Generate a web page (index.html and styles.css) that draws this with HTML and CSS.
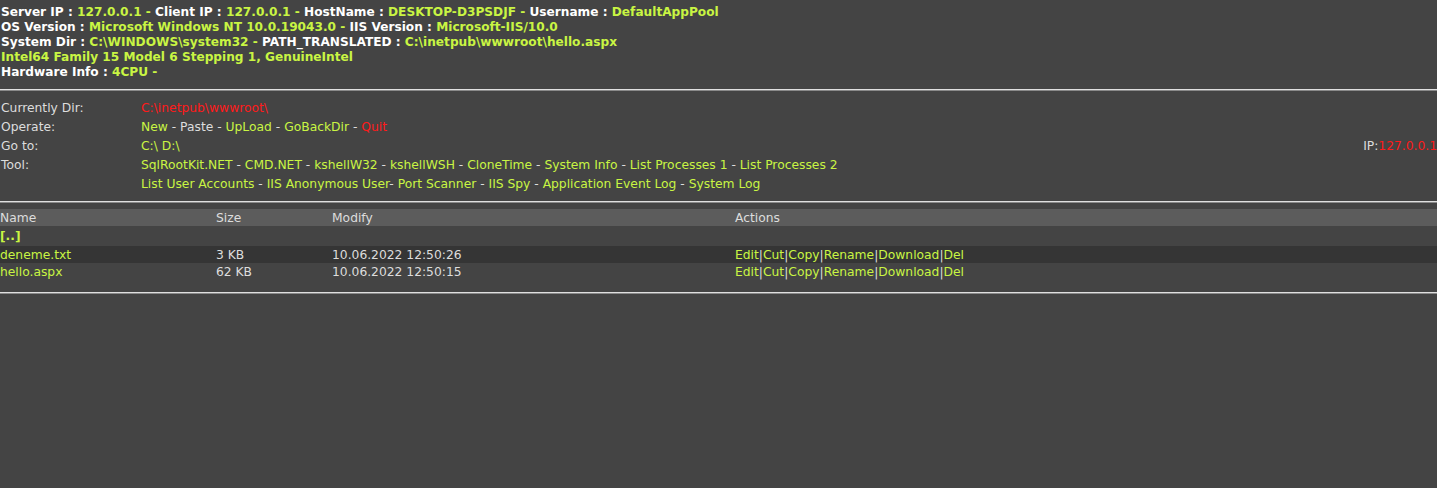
FILE: index.html
```html
<!DOCTYPE html>
<html lang="en">
<head>
    <meta charset="UTF-8">
    <title>ASPXSpy</title>
    <link rel="stylesheet" href="styles.css">
</head>
<body>
    <!-- server info -->
    <div class="sysinfo">
        <div><b>Server IP : </b><span class="val">127.0.0.1 - </span><b>Client IP : </b><span class="val">127.0.0.1 - </span><b>HostName : </b><span class="val">DESKTOP-D3PSDJF - </span><b>Username : </b><span class="val">DefaultAppPool</span></div>
        <div><b>OS Version : </b><span class="val">Microsoft Windows NT 10.0.19043.0 - </span><b>IIS Version : </b><span class="val">Microsoft-IIS/10.0</span></div>
        <div><b>System Dir : </b><span class="val">C:\WINDOWS\system32 - </span><b>PATH_TRANSLATED : </b><span class="val">C:\inetpub\wwwroot\hello.aspx</span></div>
        <div><span class="val">Intel64 Family 15 Model 6 Stepping 1, GenuineIntel</span></div>
        <div><b>Hardware Info : </b><span class="val">4CPU - </span></div>
    </div>
    <div class="rule"></div>

    <table class="menu">
        <tr>
            <td class="label">Currently Dir:</td>
            <td><span class="red">C:\inetpub\wwwroot\</span></td>
            <td></td>
        </tr>
        <tr>
            <td class="label">Operate:</td>
            <td><a href="#">New</a> - <a href="#" class="plain">Paste</a> - <a href="#">UpLoad</a> - <a href="#">GoBackDir</a> - <a href="#" class="red">Quit</a></td>
            <td></td>
        </tr>
        <tr>
            <td class="label">Go to:</td>
            <td><a href="#">C:\</a> <a href="#">D:\</a></td>
            <td class="ip">IP:<span class="red">127.0.0.1</span></td>
        </tr>
        <tr>
            <td class="label">Tool:</td>
            <td><a href="#">SqlRootKit.NET</a> - <a href="#">CMD.NET</a> - <a href="#">kshellW32</a> - <a href="#">kshellWSH</a> - <a href="#">CloneTime</a> - <a href="#">System Info</a> - <a href="#">List Processes 1</a> - <a href="#">List Processes 2</a></td>
            <td></td>
        </tr>
        <tr>
            <td class="label"></td>
            <td><a href="#">List User Accounts</a> - <a href="#">IIS Anonymous User</a>- <a href="#">Port Scanner</a> - <a href="#">IIS Spy</a> - <a href="#">Application Event Log</a> - <a href="#">System Log</a></td>
            <td></td>
        </tr>
    </table>
    <div class="rule mid"></div>

    <!-- file list -->
    <table class="files">
        <tr class="head">
            <td class="c-name">Name</td>
            <td class="c-size">Size</td>
            <td class="c-mod">Modify</td>
            <td>Actions</td>
        </tr>
        <tr class="updir">
            <td colspan="4"><a href="#">[..]</a></td>
        </tr>
        <tr class="alt">
            <td><a href="#">deneme.txt</a></td>
            <td>3 KB</td>
            <td>10.06.2022 12:50:26</td>
            <td class="acts"><a href="#">Edit</a>|<a href="#">Cut</a>|<a href="#">Copy</a>|<a href="#">Rename</a>|<a href="#">Download</a>|<a href="#">Del</a></td>
        </tr>
        <tr>
            <td><a href="#">hello.aspx</a></td>
            <td>62 KB</td>
            <td>10.06.2022 12:50:15</td>
            <td class="acts"><a href="#">Edit</a>|<a href="#">Cut</a>|<a href="#">Copy</a>|<a href="#">Rename</a>|<a href="#">Download</a>|<a href="#">Del</a></td>
        </tr>
    </table>
    <div class="rule bottom"></div>
</body>
</html>
```

FILE: styles.css
```css
body {
    margin: 0;
    padding: 0;
    background-color: #444444;
    color: #dddddd;
    font-family: "DejaVu Sans", Verdana, sans-serif;
    font-size: 12.3px;
}
a {
    color: #c9f543;
    text-decoration: none;
}
.val {
    color: #c9f543;
}
.red, a.red {
    color: #ff1a1a;
}
a.plain {
    color: #dddddd;
}

/* top block with server details */
.sysinfo {
    padding: 5px 0 0 1px;
    font-size: 12.15px;
    line-height: 15px;
    font-weight: bold;
    color: #ffffff;
}
.sysinfo b {
    color: #ffffff;
}

.rule {
    margin-top: 9px;
    border-top: 1px solid #e0e0e0;
    border-bottom: 1px solid #8a8a8a;
}
.rule.mid {
    margin-top: 8px;
}
.rule.bottom {
    margin-top: 12px;
}

/* operate / tool menu */
.menu {
    width: 100%;
    border-collapse: collapse;
    margin-top: 7px;
}
.menu td {
    padding: 0;
    height: 19px;
    white-space: nowrap;
}
.menu td.label {
    width: 140px;
    padding-left: 1px;
}
.menu td.ip {
    text-align: right;
}

/* file listing */
.files {
    width: 100%;
    border-collapse: collapse;
    margin-top: 6px;
}
.files td {
    padding: 0;
    height: 17px;
    white-space: nowrap;
}
.files .head td {
    background-color: #5c5c5c;
    height: 17px;
}
.files .c-name {
    width: 216px;
}
.files .c-size {
    width: 116px;
}
.files .c-mod {
    width: 403px;
}
.files .updir td {
    height: 20px;
    font-weight: bold;
}
.files tr.alt td {
    background-color: #353535;
}
.acts a {
    color: #c9f543;
}
```
